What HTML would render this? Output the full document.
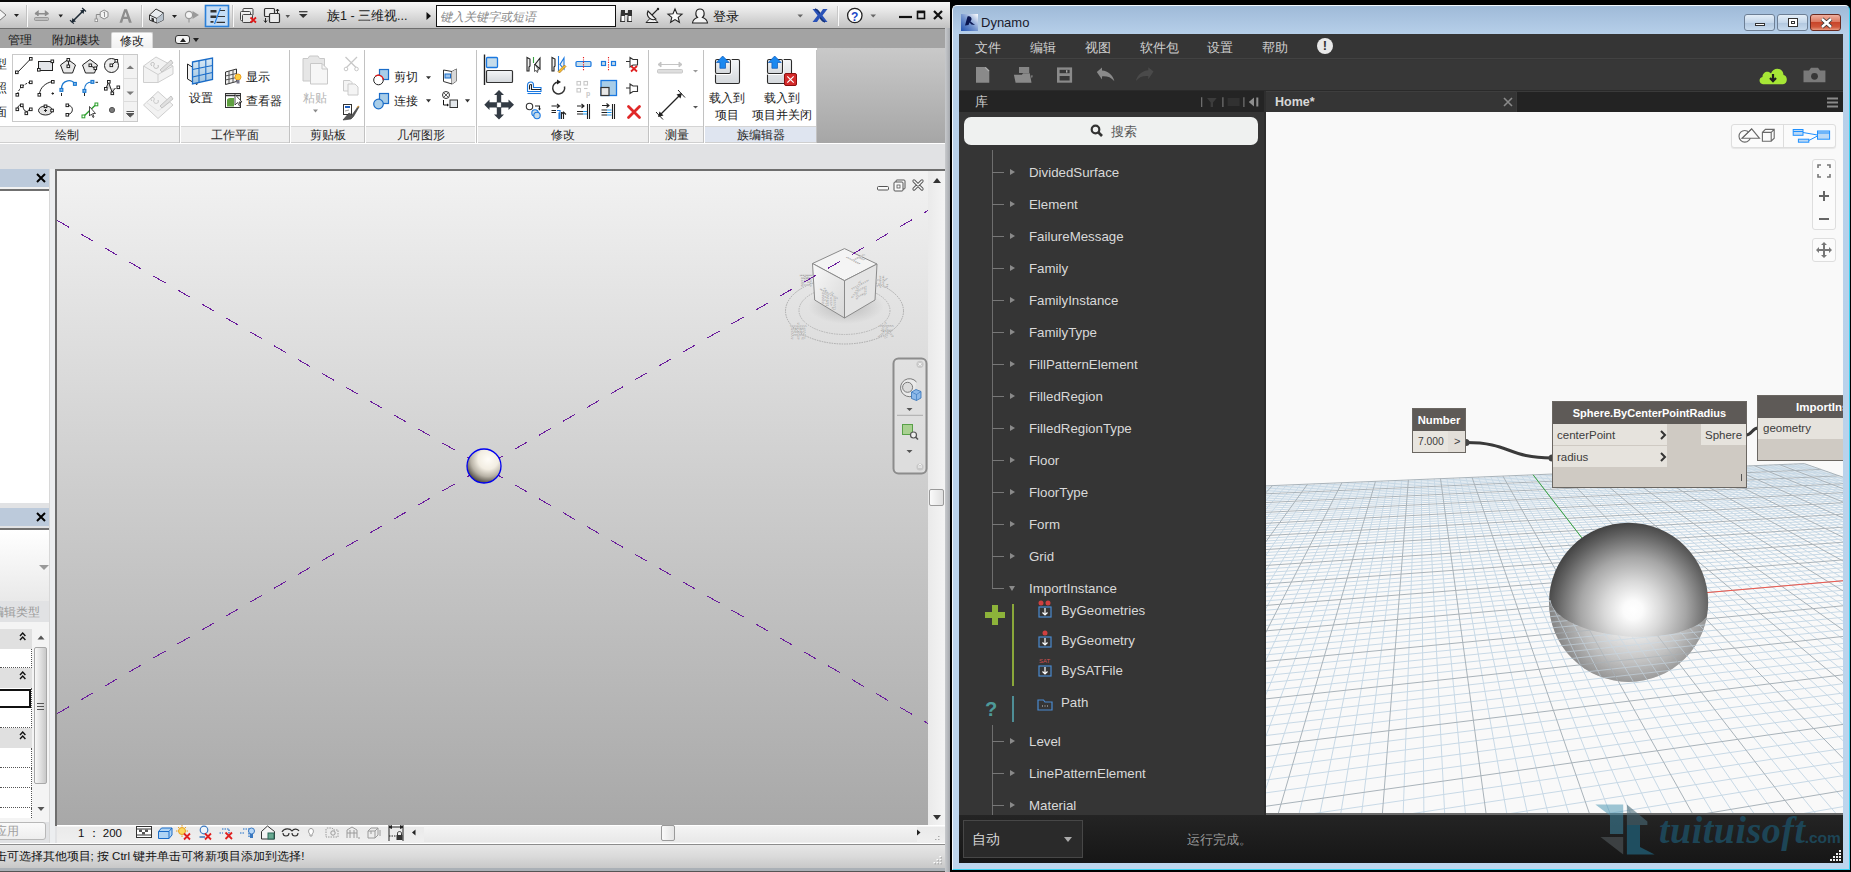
<!DOCTYPE html><html><head><meta charset="utf-8"><style>
*{margin:0;padding:0;box-sizing:border-box}
html,body{width:1851px;height:872px;overflow:hidden;background:#000;font-family:"Liberation Sans",sans-serif}
.a{position:absolute}
.t{position:absolute;white-space:nowrap;line-height:1}
svg{overflow:visible}
/* ---------- dynamo ---------- */
#dy{left:952px;top:5px;width:898px;height:865px;border-radius:5px 5px 0 0;background:linear-gradient(#9fbad8 0,#b6cfe9 28px,#bdd5ed 100%);border:1px solid #f4f8fc;border-right-color:#3ad2f2;border-bottom-color:#3ad2f2}
#dyin{left:6px;top:28px;width:884px;height:829px;background:#353535;overflow:hidden}
.dmenu{position:absolute;top:8px;color:#cfcfcf;font-size:12.5px;line-height:1;white-space:nowrap}
.lib{position:absolute;left:70px;color:#d9d9d9;font-size:13.3px;line-height:1;white-space:nowrap}
.lstub{position:absolute;left:33px;width:12px;height:1px;background:#777}
.larr{position:absolute;left:51px;width:0;height:0;border-left:5px solid #8a8a8a;border-top:3.5px solid transparent;border-bottom:3.5px solid transparent}
.node{position:absolute;background:#cfcac3;border:1px solid #6b6762}
.nhead{position:absolute;left:0;top:0;right:0;background:#5e5a57;color:#fff;font-weight:bold;text-align:center;white-space:nowrap;line-height:1}
.nrow{position:absolute;background:#e6e3dd;color:#3c3c3c;font-size:11.5px;white-space:nowrap;line-height:1}
/* ---------- revit ---------- */
#rv{left:0;top:0;width:950px;height:872px;background:#e1e2e4;overflow:hidden}
.qsep{position:absolute;top:6px;width:1px;height:18px;background:#c4c4c4;border-right:1px solid #fff}
.dd{position:absolute;width:0;height:0;border-top:4px solid #333;border-left:3.5px solid transparent;border-right:3.5px solid transparent}
.pt{position:absolute;top:78px;height:17px;background:#efefef;border-top:1px solid #d4d4d4;border-bottom:1px solid #cfcfcf;color:#262626;font-size:12px;line-height:16px;text-align:center;white-space:nowrap}
.psep{position:absolute;top:2px;width:1px;height:93px;background:#c2c2c2}
.rt{position:absolute;font-size:12px;color:#222;white-space:nowrap;line-height:1}
</style></head><body><div id="rv" class="a">
 <!-- QAT -->
 <div class="a" style="left:0;top:0;width:950px;height:2px;background:#0a0a0a"></div>
 <div class="a" style="left:0;top:2px;width:950px;height:26px;background:linear-gradient(#f8f8f8,#e8e8e8 30%,#d2d2d2 70%,#c2c2c2)"></div>
 <svg class="a" style="left:0;top:0" width="950" height="30">
 <path d="M-1 9L6 15L-1 21" fill="#f4f4f4" stroke="#777" stroke-width="1"/>
 <path d="M14 14H19L16.5 17Z" fill="#222"/>
 <path d="M26.5 5V27" stroke="#c2c2c2"/><path d="M27.5 5V27" stroke="#fafafa"/>
 <path d="M35 13.7H48.5M35 13.7L38 11.5V16M48.5 13.7L45.5 11.5V16" stroke="#8c8c8c" stroke-width="1.4" fill="#8c8c8c"/>
 <rect x="34.5" y="17.5" width="14" height="3" rx="1" fill="#bcbcbc" stroke="#8c8c8c" stroke-width=".8"/>
 <path d="M58.5 14.5H63L60.7 17.5Z" fill="#222"/>
 <path d="M73 21L83 11" stroke="#1e2a36" stroke-width="1.6"/><path d="M71.5 22.5L72.5 18L76 21.5ZM84.5 9.5L80 10.5L83.5 14Z" fill="#1e2a36"/>
 <path d="M70 20.2L73.9 23.6M82.1 8L86 11.5" stroke="#1e2a36" stroke-width="1.2"/>
 <path d="M104.1 10L108 12.2V16.8L104.1 19L100.2 16.8V12.2Z" fill="#f2f2f2" stroke="#8a8a8a"/>
 <path d="M103.5 12.5L104.5 12V17" stroke="#8a8a8a" stroke-width=".9" fill="none"/>
 <path d="M96.3 19V14.5H100" stroke="#8a8a8a" fill="none"/><rect x="95" y="19" width="2.6" height="2.6" fill="#fff" stroke="#8a8a8a" stroke-width=".8"/>
 <path d="M119.5 22.7L124.2 9.3H127L131.8 22.7H129L127.8 19H123.3L122.2 22.7ZM124 16.8H127.1L125.6 12Z" fill="#8c8c8c"/>
 <path d="M141.5 5V27" stroke="#c2c2c2"/><path d="M142.5 5V27" stroke="#fafafa"/>
 <path d="M149.5 15L156 9L163.5 13V20L157 23L149.5 20Z" fill="#e8ecf0" stroke="#333" stroke-width="1"/>
 <path d="M149.5 15L157 18.5L163.5 13M157 18.5V23" stroke="#333" fill="none"/><path d="M157 18.5L163.5 13V20L157 23Z" fill="#b8c2cc"/>
 <path d="M151.5 21V17.5L154 18.5V22" fill="#333"/>
 <path d="M172 15H177L174.5 18Z" fill="#222"/>
 <circle cx="189" cy="15" r="3.6" fill="#f4f4f4" stroke="#9a9a9a" stroke-width="1.2"/><path d="M192.5 11L199 15L192.5 19Z" fill="#9a9a9a"/><path d="M189 18.6V22.5" stroke="#9a9a9a" stroke-width="1.2"/>
 <rect x="205.5" y="5.5" width="23" height="21" fill="#c6ddf5" stroke="#2a7fd8" stroke-width="1.6"/>
 <path d="M210.5 10H216.5V12.5H210.5ZM210.5 15.5H216.5V18H210.5ZM210.5 21H213.5V22.8H210.5Z" fill="#333"/>
 <path d="M219 10.5H225M217.5 16.5H225M216.5 22.3H225" stroke="#333" stroke-width="1.2"/>
 <path d="M220.5 8L214.5 24" stroke="#2080e8" stroke-width="1.2"/>
 <path d="M232.5 5V27" stroke="#c2c2c2"/><path d="M233.5 5V27" stroke="#fafafa"/>
 <rect x="243" y="8.5" width="10" height="7" rx="1" fill="#f0f0f0" stroke="#444"/><rect x="240.5" y="11.5" width="10" height="9" rx="1" fill="#f0f0f0" stroke="#444"/><rect x="242.5" y="14.5" width="10" height="8" rx="1" fill="#e8e8e8" stroke="#444"/>
 <path d="M250.5 17.5L256 22.5M256 17.5L250.5 22.5" stroke="#e01818" stroke-width="1.8"/>
 <rect x="264.5" y="8.5" width="10" height="8" rx="1" fill="#eee" stroke="#333" stroke-width="1.2"/><rect x="269.5" y="13.5" width="10" height="9" rx="1" fill="#ececec" stroke="#333" stroke-width="1.2"/>
 <path d="M277.5 13V9.5M276 11L277.5 9L279 11M265.5 18V22M264 20.5L265.5 22.5L267 20.5" stroke="#111" stroke-width=".9" fill="none"/>
 <path d="M285.5 15H290L287.7 18Z" fill="#555"/>
 <path d="M299 11.7H307.5" stroke="#333" stroke-width="1.2"/><path d="M299 14H307.5L303.2 18Z" fill="#333"/>
 <text x="327" y="20" font-family="Liberation Sans" font-size="12.5" fill="#1a1a1a">族1 - 三维视...</text>
 <path d="M426.5 12V20L431 16Z" fill="#111"/>
 <rect x="436.5" y="5.5" width="179" height="21" fill="#fff" stroke="#111" stroke-width="1"/>
 <text x="440" y="20.5" font-family="Liberation Sans" font-size="12" font-style="italic" fill="#8a8a8a">键入关键字或短语</text>
 <path d="M621 10H625V22H620ZM628 10H632V22H627Z" fill="#333"/><rect x="621.5" y="16" width="3" height="5" fill="#fff"/><rect x="628.5" y="16" width="3" height="5" fill="#fff"/><path d="M625 14H628" stroke="#333" stroke-width="2"/>
 <path d="M646 22.5H658L654 18.5H650Z" fill="#f2f2f2" stroke="#222" stroke-width="1"/><path d="M648 11A6 6 0 0 0 656 19Z" fill="#f0f0f0" stroke="#222" stroke-width="1.1"/><path d="M652 15L657.5 9.5" stroke="#222" stroke-width="1.1"/><circle cx="658" cy="9" r="1.2" fill="#222"/>
 <path d="M675 9L677 13.8L682 14.2L678.2 17.4L679.4 22.3L675 19.6L670.6 22.3L671.8 17.4L668 14.2L673 13.8Z" fill="#fafafa" stroke="#222" stroke-width="1.1"/>
 <path d="M692.5 23C693 19 696 18 697.5 17.5C695 15.5 695 9 700 9C705 9 705 15.5 702.5 17.5C704 18 707 19 707.5 23Z" fill="#f4f4f4" stroke="#222" stroke-width="1.1"/>
 <text x="713" y="20.5" font-family="Liberation Sans" font-size="12.5" fill="#111">登录</text>
 <path d="M797.5 14.5H803L800.2 17.5Z" fill="#666"/>
 <path d="M812.5 9H817L820 13.5L823 9H827.5L822.5 15.5L827.5 22H823L820 17.5L817 22H812.5L817.5 15.5Z" fill="#2a52b8"/><path d="M815 9C818 10 819 12 820 13.5M825 22C822 21 821 19 820 17.5" stroke="#16347a" stroke-width="1.5" fill="none"/>
 <path d="M837.5 6V26" stroke="#c8c8c8"/><path d="M838.5 6V26" stroke="#fafafa"/>
 <circle cx="854.8" cy="15.5" r="7.2" fill="#fff" stroke="#222" stroke-width="1.3"/><text x="851" y="20.5" font-family="Liberation Sans" font-weight="bold" font-size="12" fill="#1c48c8">?</text>
 <path d="M870.5 14.5H876L873.2 17.5Z" fill="#666"/>
 <path d="M899 17H912" stroke="#111" stroke-width="2.2"/>
 <rect x="917.5" y="11.5" width="7" height="7" fill="none" stroke="#111" stroke-width="1.6"/><path d="M917.5 12H924.5" stroke="#111" stroke-width="2.5"/>
 <path d="M934 11L942 19M942 11L934 19" stroke="#111" stroke-width="2.2"/>
</svg>

 <!-- tabs -->
 <div class="a" style="left:0;top:28px;width:946px;height:20px;background:#a3a3a3;border-top:1px solid #6e6e6e"></div>
 <div class="rt" style="left:8px;top:34px;color:#1a1a1a">管理</div>
 <div class="rt" style="left:52px;top:34px;color:#1a1a1a">附加模块</div>
 <div class="a" style="left:111px;top:32px;width:42px;height:17px;background:linear-gradient(#fdfdfd,#f0f0f0);border:1px solid #d6d6d6;border-bottom:0;border-radius:2px 2px 0 0"></div>
 <div class="rt" style="left:120px;top:35px;color:#1a1a1a">修改</div>
 <div class="a" style="left:175px;top:35px;width:15px;height:9px;border:1px solid #333;border-radius:3px;background:#f4f4f4"><div class="a" style="left:3.5px;top:1.5px;width:0;height:0;border-bottom:4px solid #222;border-left:3.5px solid transparent;border-right:3.5px solid transparent"></div></div>
 <div class="dd" style="left:193px;top:38px;border-top-color:#222"></div>
 <!-- ribbon -->
 <div class="a" style="left:0;top:48px;width:946px;height:96px;background:#fff"></div>
 <div class="a" style="left:817px;top:48px;width:129px;height:95px;background:linear-gradient(#c9c9c9,#b4b4b4 60%,#a6a6a6)"></div>
 <div class="pt" style="left:0;top:126px;width:179px;padding-left:0"><span class="a" style="left:55px;top:0">绘制</span></div>
 <div class="pt" style="left:181px;top:126px;width:108px">工作平面</div>
 <div class="pt" style="left:291px;top:126px;width:73px">剪贴板</div>
 <div class="pt" style="left:366px;top:126px;width:109px">几何图形</div>
 <div class="pt" style="left:478px;top:126px;width:170px">修改</div>
 <div class="pt" style="left:650px;top:126px;width:53px">测量</div>
 <div class="pt" style="left:705px;top:126px;width:111px;background:#dfe5f0">族编辑器</div>
 <div class="psep" style="left:179px;top:50px"></div>
 <div class="psep" style="left:289px;top:50px"></div>
 <div class="psep" style="left:364px;top:50px"></div>
 <div class="psep" style="left:476px;top:50px"></div>
 <div class="psep" style="left:648px;top:50px"></div>
 <div class="psep" style="left:703px;top:50px"></div>
 <div class="psep" style="left:816px;top:50px"></div>
 <div class="rt" style="left:-5px;top:58px;color:#1a1a1a">型</div>
<div class="rt" style="left:-5px;top:82px;color:#1a1a1a">照</div>
<div class="rt" style="left:-5px;top:106px;color:#1a1a1a">面</div>
<div class="rt" style="left:189px;top:92px;color:#1a1a1a">设置</div>
<div class="rt" style="left:246px;top:71px;color:#1a1a1a">显示</div>
<div class="rt" style="left:246px;top:95px;color:#1a1a1a">查看器</div>
<div class="rt" style="left:303px;top:92px;color:#b4b4b4">粘贴</div>
<div class="rt" style="left:394px;top:71px;color:#1a1a1a">剪切</div>
<div class="rt" style="left:394px;top:95px;color:#1a1a1a">连接</div>
<div class="rt" style="left:709px;top:92px;color:#1a1a1a">载入到</div>
<div class="rt" style="left:715px;top:109px;color:#1a1a1a">项目</div>
<div class="rt" style="left:764px;top:92px;color:#1a1a1a">载入到</div>
<div class="rt" style="left:752px;top:109px;color:#1a1a1a">项目并关闭</div>
<svg class="a" style="left:0;top:0" width="950" height="144">
 <defs>
  <linearGradient id="gg" x1="0" y1="0" x2="0" y2="1"><stop offset="0" stop-color="#f4f6f8"/><stop offset="1" stop-color="#d4d8dc"/></linearGradient>
  <linearGradient id="gb" x1="0" y1="0" x2="0" y2="1"><stop offset="0" stop-color="#dcebf6"/><stop offset="1" stop-color="#9cc2e0"/></linearGradient>
 </defs>
 <!-- gallery -->
 <rect x="12.5" y="54.5" width="125" height="67" fill="#fff" stroke="#c9c9c9"/>
 <rect x="123.5" y="55" width="13.5" height="66" fill="#f2f2f2"/><path d="M123.5 55V121" stroke="#dedede"/>
 <path d="M124 78.5H137M124 101.5H137" stroke="#dcdcdc"/>
 <path d="M126.5 69H134L130.2 65.5Z" fill="#7a7a7a"/><path d="M126.5 91.5H134L130.2 95Z" fill="#7a7a7a"/>
 <path d="M126.5 111.5H134M126.5 113.5L134 113.5L130.2 117Z" stroke="#555" fill="#555"/>
 <g fill="#fff" stroke="#222" stroke-width="1">
  <!-- row1 -->
  <path d="M17.5 72.5L30.5 59" fill="none"/><rect x="15.5" y="71" width="2.6" height="2.6"/><rect x="29.5" y="57.5" width="2.6" height="2.6"/>
  <rect x="38.5" y="61.5" width="14" height="9" fill="#e4e6ea"/><rect x="37.5" y="68.5" width="2.6" height="2.6"/><rect x="51" y="60" width="2.6" height="2.6"/>
  <path d="M68 59.5L75.5 65L72.5 73H63.5L60.5 65Z" fill="#e8e8e8"/><path d="M68.5 60.5V66" fill="none"/><rect x="67" y="58.5" width="2.6" height="2.6"/><rect x="67" y="65" width="2.6" height="2.6"/>
  <path d="M90 59.5L97.5 65L94.5 73H85.5L82.5 65Z" fill="#e8e8e8"/><path d="M90.5 65.5L95 68.5" fill="none"/><rect x="89" y="64" width="2.6" height="2.6"/><rect x="94" y="67" width="2.6" height="2.6"/>
  <circle cx="111.5" cy="65.5" r="7" fill="#eee"/><path d="M111.5 65.5L116 61" fill="none"/><rect x="110" y="64" width="2.6" height="2.6"/><rect x="115" y="59.5" width="2.6" height="2.6"/>
  <!-- row2 -->
  <path d="M17.5 94C19 88 24 84 30.5 82" fill="none" stroke-dasharray="2 1.2"/><rect x="16" y="93.5" width="2.6" height="2.6"/><rect x="20.5" y="85" width="2.6" height="2.6"/><rect x="29.5" y="81" width="2.6" height="2.6"/>
  <path d="M39.5 94C40 88 45 83 52.5 81.5" fill="none"/><rect x="38" y="93.5" width="2.6" height="2.6"/><rect x="51.5" y="80.5" width="2.6" height="2.6"/><path d="M51.5 93.5H54M52.7 92.3V94.7" fill="none"/>
 </g>
 <g fill="#fff" stroke="#1a78d0" stroke-width="1.2">
  <path d="M61.5 89C61.5 79 73.5 79 74.5 84" fill="none"/><rect x="60" y="88.5" width="2.8" height="2.8" fill="#9cc8f0"/><rect x="73.5" y="82.5" width="2.8" height="2.8" fill="#9cc8f0"/>
  <path d="M84.5 90C84.5 85 87 82 92 82" fill="none"/><rect x="83" y="89.5" width="2.8" height="2.8" fill="#9cc8f0"/><rect x="91" y="80.5" width="2.8" height="2.8" fill="#9cc8f0"/>
 </g>
 <path d="M61.5 93V96M84.5 93V96" stroke="#222"/><path d="M95.5 82.3H98" stroke="#222"/>
 <g fill="#fff" stroke="#222" stroke-width="1">
  <path d="M106 88.5L108.5 82L112 92L115.5 88" fill="#d8d8d8"/><rect x="104.5" y="87.5" width="2.6" height="2.6"/><rect x="107.5" y="80.5" width="2.6" height="2.6"/><rect x="111" y="92" width="2.6" height="2.6"/><rect x="117" y="86" width="2.6" height="2.6"/>
  <!-- row3 -->
  <path d="M17.5 109C18 104 22 104 23 107C24 112 28 113 29.5 109" fill="none"/><rect x="16" y="108" width="2.6" height="2.6"/><rect x="20.5" y="104" width="2.6" height="2.6"/><rect x="25" y="112" width="2.6" height="2.6"/><rect x="29.5" y="108" width="2.6" height="2.6"/>
  <ellipse cx="45.5" cy="110.5" rx="7" ry="4.5" fill="#e4e4e4"/><path d="M44 110.5H47M45.5 109V112" fill="none"/><rect x="44.2" y="105" width="2.6" height="2.6"/><rect x="50.8" y="109.2" width="2.6" height="2.6"/>
  <path d="M67.5 105.5C74 105 74 114 67.5 114.5" fill="none"/><rect x="66" y="104" width="2.6" height="2.6"/><rect x="66" y="113.5" width="2.6" height="2.6"/>
 </g>
 <path d="M83.5 116.5L96 104.5" stroke="#2ca02c" stroke-width="1.4"/><rect x="82" y="115" width="2.8" height="2.8" fill="#fff" stroke="#2ca02c"/><rect x="95" y="103" width="2.8" height="2.8" fill="#fff" stroke="#2ca02c"/>
 <path d="M89.5 106.5V116L91.5 114L93 117.5L94 117L92.7 113.5H95.5Z" fill="#fff" stroke="#222" stroke-width=".8"/>
 <circle cx="112" cy="110" r="2.6" fill="#7a7a7a" stroke="#555"/>
 <!-- big gray icons -->
 <g fill="#f2f2f2" stroke="#cfcfcf" stroke-width="1">
  <path d="M143.5 66L156 57L173 66V74L158 82.5H143.5Z"/><path d="M143.5 66L158 74.5L173 66M158 74.5V82.5" fill="none"/>
  <path d="M152 66C148 62 156 61 154 65C152 69 160 70 158 65" fill="none" stroke="#bbb"/>
  <path d="M160 70L171 60L173 63L162 72Z" fill="#e0e0e0" stroke="#c4c4c4"/>
  <path d="M143.5 105L158 91.5L173 105L158 118.5Z"/><path d="M146 102L158 111L170 102" fill="none" stroke="#e2e2e2"/>
  <path d="M152 101C148 97 156 96 154 100C152 104 160 105 158 100" fill="none" stroke="#c4c4c4"/>
  <path d="M160 106L171 96L173 99L162 108Z" fill="#e0e0e0" stroke="#c4c4c4"/>
 </g>
 <!-- work plane set -->
 <path d="M187.5 64V79L197 84.5V70Z" fill="#f4f4f4" stroke="#222"/>
 <path d="M192.5 62L212.5 58V79.5L192.5 84Z" fill="url(#gb)" stroke="#1a6cc8" stroke-width="1.3"/>
 <path d="M199 60.6V82.5M205.8 59.3V81M192.5 69.5L212.5 65.5M192.5 77L212.5 72.5" stroke="#1a6cc8" stroke-width="1.1"/>
 <!-- show -->
 <path d="M225.5 72L236.5 69V81.5L225.5 84.5Z" fill="#f0f0f0" stroke="#333"/><path d="M229 71V84M233 70V83M225.5 76L236.5 73.5M225.5 80L236.5 77.5" stroke="#555"/>
 <circle cx="238" cy="77" r="3" fill="#fcd040" stroke="#f0a020"/><rect x="236.5" y="80" width="3" height="3.5" fill="#778"/>
 <!-- viewer -->
 <rect x="225.5" y="93.5" width="15" height="14" fill="#fff" stroke="#333"/><path d="M225.5 95.5H240.5" stroke="#333" stroke-width="1.5"/>
 <path d="M227 106.5V100C227 99 228 98 230 98H234V106.5Z" fill="#5fa040"/><path d="M235 94.5V105L237.5 102.5L239.5 106L240.5 105.5L239 102H242Z" fill="#fff" stroke="#222" stroke-width=".8"/>
 <!-- paste -->
 <path d="M303 58.5H308L309.5 56H318L319.5 58.5H324.5V81H303Z" fill="#e6e6e6" stroke="#c8c8c8"/>
 <path d="M310.5 63.5H322L327.5 69V84H310.5Z" fill="#f6f6f6" stroke="#c8c8c8"/><path d="M322 63.5V69H327.5" fill="none" stroke="#c8c8c8"/>
 <path d="M313 109.5H318L315.5 112.5Z" fill="#8a8a8a"/>
 <!-- scissors, copy, match -->
 <path d="M345.5 57L357 68.5M357 57L345.5 68.5" stroke="#c8c8c8" stroke-width="1.3"/><circle cx="346" cy="69" r="1.8" fill="#fff" stroke="#c8c8c8"/><circle cx="356.5" cy="69" r="1.8" fill="#fff" stroke="#c8c8c8"/>
 <path d="M343.5 80.5H350L352 82.5V91H343.5Z" fill="#f4f4f4" stroke="#cacaca"/><path d="M348 84H355L358 87V95H348Z" fill="#f4f4f4" stroke="#cacaca"/>
 <rect x="343.5" y="104.5" width="8" height="10" fill="#fff" stroke="#333"/><rect x="345" y="106" width="5" height="2" fill="#2060c0"/><path d="M345 111L349 110" stroke="#999"/>
 <path d="M343 120L349 113L352 115L358.5 106L359 107L353.5 116.5L351 119Z" fill="#555" stroke="#333" stroke-width=".6"/><path d="M356 108L358.5 105.5L359 107Z" fill="#e0a040"/>
 <!-- cut/join -->
 <rect x="379.5" y="69.5" width="9" height="10" fill="#a8cde8" stroke="#1a6cc8" stroke-width="1.2"/>
 <circle cx="378.5" cy="80" r="4.8" fill="#fff" stroke="#222" stroke-width="1"/><path d="M375.5 76.3A4.8 4.8 0 0 1 383.3 80" stroke="#e81818" stroke-width="1.2" fill="none"/>
 <path d="M426 76.2H431L428.5 79.3Z" fill="#333"/><path d="M426 99.3H431L428.5 102.4Z" fill="#333"/><path d="M465 99.3H470L467.5 102.4Z" fill="#333"/>
 <rect x="379.5" y="93.5" width="9" height="10" fill="#a8cde8" stroke="#1a6cc8" stroke-width="1.2"/>
 <circle cx="378.5" cy="104" r="4.8" fill="#a8cde8" stroke="#1a6cc8" stroke-width="1.2"/>
 <path d="M443.5 70L452 71.5L456.5 69V81L452 84L443.5 81.5Z" fill="#fff" stroke="#333"/><path d="M452 71.5V84" stroke="#333"/><path d="M452 71.5L456.5 69V81L452 84Z" fill="#d8d8d8"/>
 <rect x="445" y="74" width="5.5" height="4" fill="#9cc4ec" stroke="#1a6cc8"/>
 <circle cx="446" cy="95" r="3.5" fill="#fff" stroke="#333"/><path d="M443.6 92.6L448.4 97.4M448.4 92.6L443.6 97.4" stroke="#333" stroke-width=".8"/>
 <rect x="450" y="100" width="7.5" height="7.5" fill="#e4e8ec" stroke="#333"/><path d="M443.5 100V105H448" fill="none" stroke="#111"/><path d="M447 103.5L449 105L447 106.5Z" fill="#111"/>
 <!-- modify: align, move -->
 <path d="M484.5 54.5V85" stroke="#222" stroke-width="1.4"/>
 <rect x="486.5" y="57.5" width="11" height="10" rx="1" fill="#c6dcea" stroke="#1a78e0" stroke-width="1.3"/>
 <rect x="486.5" y="70.5" width="26" height="12" rx="1" fill="url(#gg)" stroke="#333" stroke-width="1.2"/>
 <path d="M499 90L504 95H501.2V102.2H508.5V99.5L514 104.8L508.5 110V107.4H501.2V114.6H504L499 119.6L494 114.6H496.8V107.4H489.5V110L484.3 104.8L489.5 99.5V102.2H496.8V95H494Z" fill="#333b44"/>
 <rect x="496.8" y="102.2" width="4.4" height="5.2" fill="#fff" stroke="#333b44" stroke-width=".6"/>
 <!-- modify small icons -->
 <g stroke-width="1.1">
  <path d="M527 57.5L530 59V66L529 67V71H527Z" fill="#f0f0f0" stroke="#222"/><path d="M533.5 57V63" stroke="#38a040"/><path d="M540 58V69L535 64.5Z" fill="#f0f0f0" stroke="#222"/>
  <path d="M534.5 64V71.5L536 70.3L537.2 72.5L538 72L537 70H539Z" fill="#fff" stroke="#222" stroke-width=".7"/>
  <path d="M552 57.5L555 59V66L554 67V71H552Z" fill="#f0f0f0" stroke="#222"/><path d="M558.5 56V71" stroke="#1a78e0"/><path d="M564 58V69L560 64.5Z" fill="#f0f0f0" stroke="#1a78e0"/>
  <path d="M558 71.5L564.5 65L566 66.5L559.5 73Z" fill="#f8c030" stroke="#a06010" stroke-width=".6"/>
  <rect x="576" y="61.5" width="15" height="5" rx="1" fill="#c8dcea" stroke="#1a78e0" stroke-width="1.2"/><path d="M583.5 57V71" stroke="#e82020" stroke-dasharray="1.2 1.2"/>
  <rect x="601.5" y="61.5" width="4" height="4" fill="#c8dcea" stroke="#1a78e0" stroke-width="1.2"/><rect x="611.5" y="61.5" width="4" height="4" fill="#c8dcea" stroke="#1a78e0" stroke-width="1.2"/><path d="M608.5 57V71" stroke="#e82020" stroke-dasharray="1.2 1.2"/>
  <path d="M626 61.5H630M630 57.5L633 59.5H637.5V65H633L630 67Z" fill="#fff" stroke="#333"/><path d="M631 66L637 71.5M637 66L631 71.5" stroke="#e02020" stroke-width="1.8"/>
  <path d="M527.5 90V85.5C527.5 83 529.5 82 531 82C532.5 82 533.5 83.5 533.5 85V87.5H541V91.5H527.5Z" fill="none" stroke="#1a78e0"/><path d="M529.5 89.5V86C529.5 85 530 84.5 531 84.5C532 84.5 531.5 85 531.5 86V89.5H541" fill="none" stroke="#222"/><path d="M527.5 93.5H541" stroke="#1a78e0"/>
  <path d="M564.5 86.5A6 6 0 1 1 558 82" fill="none" stroke="#333" stroke-width="1.5"/><path d="M557 79.5L561 82L557 84.5Z" fill="#222"/>
  <g fill="#fff" stroke="#c8c8c8"><rect x="577" y="81.5" width="3.5" height="3.5"/><rect x="584" y="81.5" width="3.5" height="3.5"/><rect x="577" y="88.5" width="3.5" height="3.5"/><path d="M584 88.5H587.5"/></g><text x="586" y="96" font-size="7" font-weight="bold" fill="#c8c8c8" font-family="Liberation Sans">p</text>
  <rect x="601" y="80.5" width="15.5" height="15" fill="#a8cde8" stroke="#1a78e0" stroke-width="1.3"/><rect x="601" y="87.5" width="8" height="8" fill="#e8e8e8" stroke="#333" stroke-width="1.2"/>
  <path d="M626 88H630M630 84L633 86H637.5V91.5H633L630 93.5Z" fill="#fff" stroke="#333"/>
  <circle cx="529.5" cy="106.5" r="3.2" fill="#fff" stroke="#333"/><circle cx="535" cy="113" r="3.2" fill="#c6dcea" stroke="#1a78e0"/><circle cx="537" cy="115.5" r="3.2" fill="#c6dcea" stroke="#1a78e0"/><path d="M535 106H539.5V109" fill="none" stroke="#222"/><path d="M538 108.5H541L539.5 110.5Z" fill="#222"/>
  <path d="M551.5 106H559M557 104L559.5 106L557 108M551.5 110.5H556M551.5 112.5H556" stroke="#222" fill="none"/><path d="M557 110.5H560V119M559 112.5V119" stroke="#1a78e0" fill="none"/><path d="M561.5 119V112M563.5 119V113M561 114.5L563.5 112L566 114.5" stroke="#222" fill="none"/>
  <path d="M577 106H583.5M581.5 104L584 106L581.5 108M577 111.5H583M577 114H583" stroke="#222" fill="none"/><path d="M583 111.5H587M583 114H587" stroke="#1a98f0"/><path d="M587.5 104V119M589.5 104V119" stroke="#222"/>
  <path d="M602 105.5H608.5M606.5 103.5L609 105.5L606.5 107.5M601.5 110H607M601.5 112.5H607M601.5 115H607" stroke="#222" fill="none"/><path d="M607 110H611.5M607 112.5H611.5M607 115H611.5" stroke="#1a98f0"/><path d="M612.5 104V119M614.5 104V119" stroke="#222"/>
  <path d="M628.5 106.5L639.5 117.5M639.5 106.5L628.5 117.5" stroke="#e02828" stroke-width="2.8" stroke-linecap="round"/>
 </g>
 <!-- measure -->
 <path d="M658 64.5H682M658 64.5L661 62V67ZM682 64.5L679 62V67Z" stroke="#c4c4c4" fill="#c4c4c4"/>
 <rect x="657.5" y="69.5" width="25" height="3.5" rx="1" fill="#dedede" stroke="#c8c8c8"/>
 <path d="M693 70H698L695.5 72.5Z" fill="#9a9a9a"/>
 <path d="M659 116L681 94" stroke="#222" stroke-width="1.2"/><path d="M658 117L659.5 111.5L663.5 115.5ZM682 93L676.5 94.5L680.5 98.5Z" fill="#222"/><path d="M656 112L663 119.5M678 90L685 97.5" stroke="#222"/>
 <path d="M693 106H698L695.5 108.5Z" fill="#555"/>
 <!-- family editor -->
 <g stroke="#2a2a2a" stroke-width="1.1">
  <rect x="715.5" y="59.5" width="24" height="24" rx="1.5" fill="url(#gg)"/>
  <rect x="715.5" y="59.5" width="15" height="14" rx="1.5" fill="#e8eaee" stroke="#fff" stroke-width="3"/>
  <rect x="715.5" y="59.5" width="15" height="14" rx="1.5" fill="url(#gg)"/>
  <rect x="767.5" y="59.5" width="24" height="24" rx="1.5" fill="url(#gg)"/>
  <rect x="767.5" y="59.5" width="15" height="14" rx="1.5" fill="#e8eaee" stroke="#fff" stroke-width="3"/>
  <rect x="767.5" y="59.5" width="15" height="14" rx="1.5" fill="url(#gg)"/>
 </g>
 <path d="M722.7 56L729.2 62.5H725.5V68.3H719.9V62.5H716.3Z" fill="#1a88f0" stroke="#0a58b8" stroke-width=".7"/>
 <path d="M774.7 56L781.2 62.5H777.5V68.3H771.9V62.5H768.3Z" fill="#1a88f0" stroke="#0a58b8" stroke-width=".7"/>
 <rect x="784.5" y="73.5" width="12" height="12" rx="1.5" fill="#d42a2a" stroke="#8a1010"/><path d="M787.3 76.3L793.7 82.7M793.7 76.3L787.3 82.7" stroke="#fff" stroke-width="1.2"/>
</svg>

 <div class="a" style="left:0;top:143px;width:946px;height:1px;background:#fff"></div>
 <!-- left panels -->
 <div class="a" style="left:0;top:169px;width:51px;height:18px;background:#bccadb"></div>
 <svg class="a" style="left:36px;top:173px" width="10" height="10"><path d="M1 1L9 9M9 1L1 9" stroke="#000" stroke-width="2"/></svg>
 <div class="a" style="left:0;top:187px;width:50px;height:2px;background:#f2f2f2"></div>
 <div class="a" style="left:0;top:189px;width:50px;height:2px;background:#707070"></div>
 <div class="a" style="left:0;top:191px;width:49px;height:312px;background:#fff"></div>
 <div class="a" style="left:0;top:508px;width:51px;height:18px;background:#bccadb"></div>
 <svg class="a" style="left:36px;top:512px" width="10" height="10"><path d="M1 1L9 9M9 1L1 9" stroke="#000" stroke-width="2"/></svg>
 <div class="a" style="left:0;top:528px;width:50px;height:2px;background:#707070"></div>
 <div class="a" style="left:0;top:530px;width:49px;height:71px;background:linear-gradient(#fff,#e9e9e9)"></div>
 <div class="a" style="left:39px;top:565px;width:0;height:0;border-top:5px solid #999;border-left:5px solid transparent;border-right:5px solid transparent"></div>
 <div class="rt" style="left:-8px;top:606px;color:#9a9a9a">编辑类型</div>
 <div class="a" style="left:0;top:622px;width:50px;height:200px;background:#f4f4f4"></div>
<div class="a" style="left:0;top:629px;width:32px;height:20px;background:#e0e0e0"></div>
<div class="a" style="left:0;top:649px;width:32px;height:19px;background:#fff;border-right:1px dotted #555;border-bottom:1px dotted #555"></div>
<div class="a" style="left:0;top:668px;width:32px;height:20px;background:#e0e0e0"></div>
<div class="a" style="left:0;top:688px;width:32px;height:40px;background:#fff;border-right:1px dotted #555;border-bottom:1px dotted #555"></div>
<div class="a" style="left:-2px;top:689px;width:33px;height:19px;background:#fff;border:2px solid #111"></div>
<div class="a" style="left:0;top:728px;width:32px;height:20px;background:#e0e0e0"></div>
<div class="a" style="left:0;top:748px;width:32px;height:20px;background:#fff;border-right:1px dotted #555;border-bottom:1px dotted #555"></div>
<div class="a" style="left:0;top:768px;width:32px;height:20px;background:#fff;border-right:1px dotted #555;border-bottom:1px dotted #555"></div>
<div class="a" style="left:0;top:788px;width:32px;height:20px;background:#fff;border-right:1px dotted #555;border-bottom:1px dotted #555"></div>
<div class="a" style="left:0;top:808px;width:32px;height:10px;background:#fff;border-right:1px dotted #555"></div>
<svg class="a" style="left:0;top:620px" width="50" height="200">
 <path d="M20 16L22.7 13L25.4 16M20 20L22.7 17L25.4 20M20 55L22.7 52L25.4 55M20 59L22.7 56L25.4 59M20 115L22.7 112L25.4 115M20 119L22.7 116L25.4 119" stroke="#111" stroke-width="1.4" fill="none"/>
 <path d="M37.5 19.5H44.5L41 15.5Z" fill="#555"/>
 <path d="M37.5 187H44.5L41 191Z" fill="#555"/>
</svg>
<div class="a" style="left:34px;top:647px;width:13px;height:137px;border:1px solid #a8a8a8;border-radius:2px;background:linear-gradient(90deg,#f8f8f8,#dcdcdc 60%,#c8c8c8)"></div>
<svg class="a" style="left:36px;top:702px" width="9" height="9"><path d="M1 1.5H8M1 4.5H8M1 7.5H8" stroke="#555" stroke-width="1.2"/></svg>
<div class="a" style="left:-6px;top:822px;width:52px;height:18px;border:1px solid #b8b8b8;border-radius:3px;background:linear-gradient(#fafafa,#eeeeee)"></div>
<div class="rt" style="left:-5px;top:825px;color:#a0a0a0">应用</div>
<div class="a" style="left:49px;top:169px;width:1px;height:676px;background:#d8d8d8"></div>
<div class="a" style="left:50px;top:169px;width:5px;height:676px;background:#eceef0"></div>

 <!-- viewport -->
 <div class="a" style="left:55px;top:169px;width:891px;height:657px;background:#6e6e6e"></div>
 <div class="a" style="left:57px;top:171px;width:871px;height:654px;background:linear-gradient(#f2f2f2 0,#d0d0d0 45%,#a8a8a8 100%)"></div>
 <svg class="a" style="left:57px;top:171px" width="871" height="654" viewBox="57 171 871 654">
 <defs>
  <clipPath id="vpc"><rect x="57" y="171" width="871" height="654"/></clipPath>
  <radialGradient id="rsph" cx="0.62" cy="0.3" r="0.85"><stop offset="0" stop-color="#fffdf8"/><stop offset=".35" stop-color="#f2ede2"/><stop offset=".6" stop-color="#b8b2a6"/><stop offset=".85" stop-color="#4a463e"/><stop offset="1" stop-color="#222"/></radialGradient>
  <radialGradient id="vcsh" cx=".5" cy=".5" r=".5"><stop offset="0" stop-color="#000" stop-opacity=".18"/><stop offset="1" stop-color="#000" stop-opacity="0"/></radialGradient>
  <linearGradient id="vcl" x1="0" y1="0" x2="1" y2="1"><stop offset="0" stop-color="#f8f8f8"/><stop offset="1" stop-color="#d8d8d8"/></linearGradient>
 </defs>
 <g clip-path="url(#vpc)">
  <!-- viewcube -->
  <ellipse cx="844.5" cy="311" rx="59" ry="33" fill="none" stroke="#a8a8a8" stroke-width="1" stroke-dasharray="1.5 1"/>
  <ellipse cx="844.5" cy="310.5" rx="45.5" ry="24" fill="none" stroke="#b4b4b4" stroke-width="1" stroke-dasharray="1.5 1"/>
  <ellipse cx="846" cy="306" rx="38" ry="18" fill="url(#vcsh)"/>
  <path d="M812.5 263.5L844.5 248.6L877 264L844.5 280.7Z" fill="#f4f4f4" stroke="#8a8a8a"/>
  <path d="M812.5 263.5L844.5 280.7V318L814.7 300Z" fill="url(#vcl)" stroke="#8a8a8a"/>
  <path d="M844.5 280.7L877 264L875 300L844.5 318Z" fill="#e4e4e4" stroke="#8a8a8a"/>
  <g font-family="Liberation Sans" fill="#e6e6e6" stroke="#9c9c9c" stroke-width=".55" stroke-dasharray="1 .8">
   <text x="0" y="0" font-size="18" transform="matrix(1,0.5375,0,1,820,300)">前</text>
   <text x="0" y="0" font-size="18" transform="matrix(1,-0.514,0,1,851,300)">右</text>
   <text x="0" y="0" font-size="13" transform="matrix(1,0.53,-1,0.53,847,257)">上</text>
   <text x="800" y="285" font-size="13">西</text>
   <text x="876" y="286" font-size="12">北</text>
   <text x="790" y="337" font-size="17">南</text>
   <text x="878" y="336" font-size="16">东</text>
  </g>
  <path d="M57 220.3L928 723.5M57 713.7L928 210.5" stroke="#6a1c9c" stroke-width="1" stroke-dasharray="13.8 14.02" shape-rendering="crispEdges"/>
  <!-- sphere -->
  <circle cx="484" cy="466" r="17" fill="url(#rsph)" stroke="#0000f0" stroke-width="1.3"/>
  <!-- window ctrls -->
  <rect x="877.5" y="186.5" width="11" height="3.5" rx="1" fill="#fafafa" stroke="#555" stroke-width="1"/>
  <rect x="896" y="180" width="9" height="9" rx="1" fill="#fafafa" stroke="#555"/><rect x="894" y="182" width="9" height="9" rx="1" fill="#fafafa" stroke="#555"/><rect x="897" y="185" width="3" height="3" fill="none" stroke="#555" stroke-width=".8"/>
  <path d="M914 181L922 189M922 181L914 189" stroke="#555" stroke-width="3.2" stroke-linecap="round"/><path d="M914 181L922 189M922 181L914 189" stroke="#fafafa" stroke-width="1.4" stroke-linecap="round"/>
  <!-- nav bar -->
  <rect x="893.5" y="358.5" width="33" height="115" rx="5" fill="#e2e2e2" fill-opacity=".7" stroke="#8c8c8c" stroke-width="2"/>
  <circle cx="920" cy="364.3" r="3.6" fill="#c8c8c8"/><path d="M918.5 362.8L921.5 365.8M921.5 362.8L918.5 365.8" stroke="#fff" stroke-width="1"/>
  <path d="M916.5 382A9 9 0 1 0 913 396" fill="#eaeaea" stroke="#7a7a7a"/><circle cx="907.6" cy="387.3" r="5" fill="#dcdcdc" stroke="#7a7a7a"/>
  <path d="M911.5 392L916 389.5L921 391.5V398L916.5 400.5L911.5 398.5Z" fill="#8cb8e8" stroke="#3070b8" stroke-width=".8"/><path d="M911.5 392L916.5 394.5L921 391.5M916.5 394.5V400.5" fill="none" stroke="#3070b8" stroke-width=".6"/>
  <path d="M906.5 408H912.5L909.5 411Z" fill="#555"/>
  <path d="M897 415.3H923" stroke="#aaa"/>
  <rect x="902.5" y="424.5" width="10" height="10" fill="#a8d090" stroke="#58a048"/>
  <circle cx="913.5" cy="435" r="3" fill="#eee" stroke="#555" stroke-width="1.2"/><path d="M915.5 437L918 439.5" stroke="#555" stroke-width="1.6"/>
  <path d="M906.5 450H912.5L909.5 453Z" fill="#555"/>
  <circle cx="920" cy="467" r="3.6" fill="#c8c8c8"/><path d="M918 467H922M918.5 465.5L920 464.2L921.5 465.5" stroke="#fff" stroke-width=".9" fill="none"/>
 </g>
</svg>

 <!-- right scrollbar -->
 <div class="a" style="left:928px;top:171px;width:17px;height:654px;background:linear-gradient(90deg,#eaeaea,#f4f4f4)"></div>
 <div class="a" style="left:933px;top:178px;width:0;height:0;border-bottom:5px solid #333;border-left:4px solid transparent;border-right:4px solid transparent"></div>
 <div class="a" style="left:933px;top:815px;width:0;height:0;border-top:5px solid #333;border-left:4px solid transparent;border-right:4px solid transparent"></div>
 <div class="a" style="left:929px;top:489px;width:15px;height:17px;border:1px solid #9a9a9a;border-radius:2px;background:linear-gradient(90deg,#fafafa,#e0e0e0)"></div>
 <!-- view control bar -->
 <div class="a" style="left:57px;top:825px;width:888px;height:18px;background:linear-gradient(#fff 0,#fff 1px,#eaeaea 2px,#efefef 100%)"></div>
 <div class="a" style="left:0;top:843px;width:946px;height:1px;background:#fff"></div>
 <div class="a" style="left:0;top:844px;width:946px;height:1px;background:#8c8c8c"></div>
 <div class="rt" style="left:78px;top:828px;font-size:11.5px;color:#111">1 ： 200</div>
<svg class="a" style="left:0;top:820px" width="950" height="26">
 <rect x="136.5" y="6.5" width="15" height="11" fill="#fff" stroke="#333"/><path d="M137 9H151M137 15H151" stroke="#333"/><rect x="139" y="9.5" width="3" height="2.5" fill="#555"/><rect x="145" y="9.5" width="3" height="2.5" fill="#555"/><rect x="142" y="12" width="3" height="2.5" fill="#555"/>
 <path d="M158.5 11.5L161.5 8H172V15L169 18.5H158.5Z" fill="#b0d4f4" stroke="#1a6cc8"/><path d="M158.5 11.5H169V18.5M169 11.5L172 8" fill="none" stroke="#1a6cc8"/>
 <circle cx="182" cy="11" r="3.5" fill="#fcd860" stroke="#e8a020"/><path d="M182 5V6.5M182 15.5V17M176 11H177.5M186.5 11H188M178 7L179 8M185 14L186 15M186 7L185 8" stroke="#e8a020"/><path d="M184 13.5L190 19.5M190 13.5L184 19.5" stroke="#e02020" stroke-width="1.8"/>
 <circle cx="204" cy="10" r="3.8" fill="#eef4fa" stroke="#3a78c0" stroke-width="1.2"/><path d="M199.5 17H205" stroke="#3a78c0" stroke-width="1.5"/><path d="M205 13.5L211 19.5M211 13.5L205 19.5" stroke="#e02020" stroke-width="1.8"/>
 <path d="M219.5 13H223M222 9H229V15" fill="none" stroke="#1a6cc8" stroke-width="1.2" stroke-dasharray="1.5 1"/><path d="M225.5 12.5L232 19M232 12.5L225.5 19" stroke="#e02020" stroke-width="1.8"/>
 <path d="M240 13H244M243 9H249V18" fill="none" stroke="#1a6cc8" stroke-width="1.2" stroke-dasharray="1.5 1"/><circle cx="251.5" cy="11" r="3" fill="#b8d8f8" stroke="#3a78c0"/><rect x="250" y="14" width="3" height="4" fill="#3a78c0"/>
 <path d="M261.5 11.5L267.5 6L274.5 11.5V19H261.5Z" fill="#f4f4f4" stroke="#333"/><rect x="268" y="13" width="6" height="6" fill="#68a890" stroke="#2a6858"/>
 <path d="M282 12C284 8 290 8 292 11C294 8 298 9 299 11M283 13C283 17 289 17 289 13M292 13C292 17 298 17 298 13" fill="none" stroke="#333" stroke-width="1.1"/>
 <path d="M311 8.5C308 8.5 308 13 310 14V16H312V14C314 13 314 8.5 311 8.5Z" fill="#fff" stroke="#999"/>
 <path d="M326 9V17H338V10H334L332 8H326" fill="none" stroke="#9a9a9a" stroke-dasharray="1.5 1"/><circle cx="333" cy="13" r="2.2" fill="none" stroke="#9a9a9a"/>
 <path d="M347 18V10L352 7L357 10V18M347 13H357M350 10V18M354 10V18" fill="none" stroke="#9a9a9a"/><path d="M358 18H360" stroke="#9a9a9a"/>
 <path d="M368 11L371 8H378V15L375 18H368Z" fill="none" stroke="#9a9a9a"/><path d="M368 11H375V18M375 11L378 8M371 11V14" fill="none" stroke="#9a9a9a"/><path d="M380 10V16" stroke="#9a9a9a"/>
 <path d="M389 5V21M403 5V21M389 7H403M389 7L391.5 5.5V8.5ZM403 7L400.5 5.5V8.5Z" fill="#222" stroke="#222" stroke-width="1"/><path d="M389 16H396" stroke="#222" stroke-dasharray="1.5 1"/><rect x="396.5" y="15" width="6" height="5" fill="#333"/><path d="M397.5 15V13.2C397.5 11 401.5 11 401.5 13.2V15" fill="none" stroke="#333" stroke-width="1"/>
 <path d="M415.5 9.5V15.5L412 12.5Z" fill="#222"/>
 <rect x="661.5" y="5.5" width="13" height="15" rx="2" fill="#f0f0f0" stroke="#9a9a9a"/>
 <path d="M917 9.5V15.5L920.5 12.5Z" fill="#222"/>
 <path d="M938 19.5h1.5M935 19.5h1.5M938 16.5h1.5" stroke="#aaa"/>
</svg>
<div class="a" style="left:424px;top:826px;width:493px;height:16px;background:linear-gradient(#f4f4f4,#e8e8e8)"></div>
<div class="a" style="left:661px;top:825px;width:14px;height:16px;border:1px solid #9a9a9a;border-radius:2px;background:linear-gradient(90deg,#fafafa,#e4e4e4)"></div>

 <!-- status bar -->
 <div class="a" style="left:0;top:845px;width:946px;height:23px;background:linear-gradient(#e6e6e6,#dadada 50%,#c8c8c8)"></div>
 <div class="rt" style="left:-5.5px;top:851px;font-size:11.5px;color:#111;width:311px;overflow:hidden">击可选择其他项目; 按 Ctrl 键并单击可将新项目添加到选择!</div>
 <svg class="a" style="left:930px;top:855px" width="14" height="12"><path d="M9.5 1h1.5v1.5h-1.5zM6.5 4h1.5v1.5h-1.5zM9.5 4h1.5v1.5h-1.5zM3.5 7h1.5v1.5h-1.5zM6.5 7h1.5v1.5h-1.5zM9.5 7h1.5v1.5h-1.5z" fill="#fff"/><path d="M10.5 2h1.5v1.5h-1.5zM7.5 5h1.5v1.5h-1.5zM10.5 5h1.5v1.5h-1.5zM4.5 8h1.5v1.5h-1.5zM7.5 8h1.5v1.5h-1.5zM10.5 8h1.5v1.5h-1.5z" fill="#b0b0b0"/></svg>
 <div class="a" style="left:0;top:868px;width:950px;height:3px;background:#aab0b6"></div>
 <div class="a" style="left:0;top:871px;width:950px;height:1px;background:#555"></div>
 <!-- right frame -->
 <div class="a" style="left:945px;top:28px;width:5px;height:844px;background:linear-gradient(90deg,#c8cacd,#a6a9ae)"></div>
</div>
<div id="dy" class="a">
 <svg class="a" style="left:8px;top:8px" width="17" height="17" viewBox="0 0 17 17"><defs><linearGradient id="dlg" x1="0" y1="1" x2="1" y2="0"><stop offset="0" stop-color="#2050b0"/><stop offset=".5" stop-color="#7898d0"/><stop offset="1" stop-color="#ffffff"/></linearGradient></defs><rect width="17" height="17" fill="url(#dlg)"/><path d="M4 11.5L6.5 2.5C8.5 1.5 11 3 10.5 5.5L9.5 7.5L14 11L10.5 10.5L8.5 8.5L7.5 11Z" fill="#0a1650"/></svg>
 <div class="t" style="left:28px;top:10px;font-size:13px;color:#1a1a2a">Dynamo</div>
 <!-- window buttons -->
 <div class="a" style="left:791px;top:8px;width:31px;height:17px;border:1px solid #6d7f95;border-radius:3px;background:linear-gradient(#e4eef8,#c5d7ea 50%,#b0c6de 51%,#c8dbee)"><div class="a" style="left:10px;top:8px;width:10px;height:3px;background:#fff;border:1px solid #333"></div></div>
 <div class="a" style="left:824px;top:8px;width:31px;height:17px;border:1px solid #6d7f95;border-radius:3px;background:linear-gradient(#e4eef8,#c5d7ea 50%,#b0c6de 51%,#c8dbee)"><div class="a" style="left:10px;top:3px;width:10px;height:9px;background:#fff;border:1px solid #333"><div class="a" style="left:2px;top:2px;width:4px;height:3px;border:1px solid #333"></div></div></div>
 <div class="a" style="left:857px;top:8px;width:31px;height:17px;border:1px solid #6a2a20;border-radius:3px;background:linear-gradient(#f0b0a0,#dc7a62 45%,#c8452a 50%,#d0583c 80%,#e89a80)"><svg class="a" style="left:9px;top:3px" width="13" height="10"><path d="M2 1L11 9M11 1L2 9" stroke="#333" stroke-width="4"/><path d="M2 1L11 9M11 1L2 9" stroke="#fff" stroke-width="2.4"/></svg></div>
 <div id="dyin" class="a">
  <!-- menu -->
  <div class="a" style="left:0;top:0;width:885px;height:25px;background:#353535;border-bottom:1px solid #424242"></div>
  <div class="dmenu" style="left:16px">文件</div>
  <div class="dmenu" style="left:71px">编辑</div>
  <div class="dmenu" style="left:126px">视图</div>
  <div class="dmenu" style="left:181px">软件包</div>
  <div class="dmenu" style="left:248px">设置</div>
  <div class="dmenu" style="left:303px">帮助</div>
  <div class="a" style="left:358px;top:4px;width:16px;height:16px;border-radius:50%;background:#e8e8e8;color:#353535;font-weight:bold;font-size:13px;text-align:center;line-height:16px">!</div>
  <!-- toolbar -->
  <div class="a" style="left:0;top:26px;width:885px;height:31px;background:#373737;border-bottom:1px solid #2a2a2a"></div>
  <svg class="a" style="left:17px;top:33px" width="180" height="18">
   <path d="M0 0H9.5L13.3 3.7V15.7H0Z" fill="#8a8a8a"/><path d="M9.3 0.3L13 4" stroke="#b0b0b0" stroke-width="1.2"/>
   <path d="M43 0H53.2V6H43Z" fill="#858585"/><path d="M37.9 7.8H45.9L47 6.3H53.8L55.5 15.7H39.6Z" fill="#8a8a8a"/><path d="M55 8.5H56.8L55.8 11.5Z" fill="#8a8a8a"/>
   <path d="M81 0.4H96.1V15.7H81Z" fill="#8a8a8a"/><rect x="83.6" y="2.8" width="10" height="3.4" fill="#373737"/><rect x="83.6" y="9" width="10" height="4.5" fill="#373737"/><rect x="90" y="3.2" width="1.4" height="2.4" fill="#aaa"/>
   <path d="M120.8 4.9L126 0.5V3.5C132 3.8 137 8 138.4 14.2C135 10.2 131 9 126 9.4V12.5Z" fill="#8a8a8a"/>
   <path d="M177.5 4.6L172.3 0.2V3.2C166.3 3.5 161.3 7.7 159.9 13.9C163.3 9.9 167.3 8.7 172.3 9.1V12.2Z" fill="#4a4a4a"/>
  </svg>
  <svg class="a" style="left:799px;top:33px" width="90" height="20">
   <path d="M5 17.2C1 17.2 0 11 4.5 10C4.5 5 10 3 13 6.5C15 0 25 0 25.5 8C30 8.5 30 17.2 25 17.2Z" fill="#a6e636"/><path d="M15 7V13.5M12 11L15 14.2L18 11" stroke="#1e1e1e" stroke-width="2.2" fill="none"/>
   <path d="M45.5 3.5H51L53 0.7H60L62 3.5H67.4V15.2H45.5Z" fill="#7a7a7a"/><circle cx="56.5" cy="9.3" r="3.4" fill="#373737"/>
  </svg>
  <!-- library header -->
  <div class="a" style="left:0;top:57px;width:305px;height:21px;background:#242424"></div>
  <div class="t" style="left:16px;top:62px;font-size:12.5px;color:#cfcfcf">库</div>
  <svg class="a" style="left:240px;top:62px" width="62" height="14"><path d="M2.7 1.2V11M23.9 1.2V11M44.9 1.2V11" stroke="#7a7a7a" stroke-width="1.1"/><path d="M8 2H17.7L14 6.5V11H11.7V6.5Z" fill="#3c3c3c"/><path d="M28.6 3H40.6M28.6 5H40.6M28.6 7H40.6M28.6 9H40.6" stroke="#3e3e3e" stroke-width="1.2"/><path d="M55 1.5V10.5L49.8 6Z" fill="#8e8e8e"/><rect x="57.3" y="1.5" width="2" height="9" fill="#8e8e8e"/></svg>
  <div class="a" style="left:305px;top:57px;width:2px;height:758px;background:#2e2e2e"></div>
  <div class="a" style="left:307px;top:57px;width:250px;height:21px;background:#353535;border-top:1px solid #3e3e3e"></div>
  <div class="t" style="left:316px;top:62px;font-size:12.5px;font-weight:bold;color:#d8d8d8">Home*</div>
  <svg class="a" style="left:544px;top:63px" width="10" height="10"><path d="M1 1L9 9M9 1L1 9" stroke="#8a8a8a" stroke-width="1.6"/></svg>
  <div class="a" style="left:557px;top:57px;width:328px;height:21px;background:#232323;border-left:1px solid #3a3a3a;border-top:1px solid #3a3a3a"></div>
  <svg class="a" style="left:868px;top:63px" width="12" height="11"><path d="M0 1.5H11M0 5.5H11M0 9.5H11" stroke="#8a8a8a" stroke-width="2"/></svg>
  <!-- library -->
  <div class="a" style="left:0;top:78px;width:305px;height:703px;background:#353535;overflow:hidden">
   <div class="a" style="left:5px;top:5px;width:294px;height:28px;background:#eff1f0;border-radius:7px"></div>
   <svg class="a" style="left:131px;top:12px" width="14" height="14"><circle cx="5.5" cy="5.5" r="3.8" fill="none" stroke="#333" stroke-width="2.2"/><path d="M8 8L12 12" stroke="#333" stroke-width="2.6"/></svg>
   <div class="t" style="left:152px;top:13px;font-size:13px;color:#555">搜索</div>
   <div class="a" style="left:33px;top:38px;width:1px;height:439px;background:#6e6e6e"></div>
   <div class="a" style="left:33px;top:613px;width:1px;height:90px;background:#6e6e6e"></div>
   <div class="lib" style="top:54px">DividedSurface</div>
<div class="lstub" style="top:60px"></div>
<div class="larr" style="top:57px"></div>
<div class="lib" style="top:86px">Element</div>
<div class="lstub" style="top:92px"></div>
<div class="larr" style="top:89px"></div>
<div class="lib" style="top:118px">FailureMessage</div>
<div class="lstub" style="top:124px"></div>
<div class="larr" style="top:121px"></div>
<div class="lib" style="top:150px">Family</div>
<div class="lstub" style="top:156px"></div>
<div class="larr" style="top:153px"></div>
<div class="lib" style="top:182px">FamilyInstance</div>
<div class="lstub" style="top:188px"></div>
<div class="larr" style="top:185px"></div>
<div class="lib" style="top:214px">FamilyType</div>
<div class="lstub" style="top:220px"></div>
<div class="larr" style="top:217px"></div>
<div class="lib" style="top:246px">FillPatternElement</div>
<div class="lstub" style="top:252px"></div>
<div class="larr" style="top:249px"></div>
<div class="lib" style="top:278px">FilledRegion</div>
<div class="lstub" style="top:284px"></div>
<div class="larr" style="top:281px"></div>
<div class="lib" style="top:310px">FilledRegionType</div>
<div class="lstub" style="top:316px"></div>
<div class="larr" style="top:313px"></div>
<div class="lib" style="top:342px">Floor</div>
<div class="lstub" style="top:348px"></div>
<div class="larr" style="top:345px"></div>
<div class="lib" style="top:374px">FloorType</div>
<div class="lstub" style="top:380px"></div>
<div class="larr" style="top:377px"></div>
<div class="lib" style="top:406px">Form</div>
<div class="lstub" style="top:412px"></div>
<div class="larr" style="top:409px"></div>
<div class="lib" style="top:438px">Grid</div>
<div class="lstub" style="top:444px"></div>
<div class="larr" style="top:441px"></div>
<div class="lib" style="top:470px">ImportInstance</div>
<div class="lstub" style="top:476px"></div>
<div class="a" style="left:50px;top:474px;width:0;height:0;border-top:5px solid #8a8a8a;border-left:3.5px solid transparent;border-right:3.5px solid transparent"></div>
<div class="lib" style="top:623px">Level</div>
<div class="lstub" style="top:629px"></div>
<div class="larr" style="top:626px"></div>
<div class="lib" style="top:655px">LinePatternElement</div>
<div class="lstub" style="top:661px"></div>
<div class="larr" style="top:658px"></div>
<div class="lib" style="top:687px">Material</div>
<div class="lstub" style="top:693px"></div>
<div class="larr" style="top:690px"></div>
<div class="lib" style="left:102px;top:492px">ByGeometries</div>
<div class="lib" style="left:102px;top:522px">ByGeometry</div>
<div class="lib" style="left:102px;top:552px">BySATFile</div>
<div class="lib" style="left:102px;top:584px">Path</div>
   <!-- import instance children -->
   <svg class="a" style="left:25px;top:492px" width="22" height="22"><path d="M8 1H14V8H21V14H14V21H8V14H1V8H8Z" fill="#8db33a"/></svg>
   <div class="a" style="left:53px;top:492px;width:2px;height:82px;background:#8aa83a"></div>
   <div class="t" style="left:26px;top:587px;font-size:20px;font-weight:bold;color:#4e9a9a">?</div>
   <div class="a" style="left:53px;top:584px;width:2px;height:26px;background:#4e8e96"></div>
   <svg class="a" style="left:78px;top:488px" width="16" height="110">
    <circle cx="4" cy="3" r="2.5" fill="#d04040"/><circle cx="11" cy="3" r="2.5" fill="#d04040"/><rect x="2" y="7" width="12" height="10" fill="none" stroke="#4a8ad0" stroke-width="1.2"/><path d="M8 8V15M5.5 12.5L8 15L10.5 12.5" stroke="#fff" stroke-width="1.2" fill="none"/>
    <circle cx="8" cy="33" r="2.5" fill="#d04040"/><rect x="2" y="37" width="12" height="10" fill="none" stroke="#4a8ad0" stroke-width="1.2"/><path d="M8 38V45M5.5 42.5L8 45L10.5 42.5" stroke="#fff" stroke-width="1.2" fill="none"/>
    <text x="2" y="63" font-size="6" fill="#d05050" font-family="Liberation Sans">SAT</text><rect x="2" y="66" width="12" height="10" fill="none" stroke="#4a8ad0" stroke-width="1.2"/><path d="M8 67V74M5.5 71.5L8 74L10.5 71.5" stroke="#fff" stroke-width="1.2" fill="none"/>
    <path d="M1 100V110H15V102H8L6.5 100Z" fill="none" stroke="#4a8ad0" stroke-width="1.2"/><path d="M5 106H6M7.5 106H8.5M10 106H11" stroke="#ccc"/>
   </svg>
  </div>
  <!-- canvas -->
  <div class="a" style="left:307px;top:78px;width:578px;height:701px;background:#f9f9f9;overflow:hidden">
   <svg class="a" style="left:0;top:0" width="578" height="701" viewBox="0 0 578 701"><defs><radialGradient id="dsph" gradientUnits="userSpaceOnUse" cx="367" cy="498" r="96"><stop offset="0" stop-color="#fff"/><stop offset=".1" stop-color="#fbfbfb"/><stop offset=".3" stop-color="#d9d9d9"/><stop offset=".55" stop-color="#a6a6a6"/><stop offset=".8" stop-color="#606060"/><stop offset="1" stop-color="#2e2e2e"/></radialGradient><clipPath id="sphc"><circle cx="362.6" cy="490.3" r="79.6"/></clipPath><clipPath id="eqc"><path d="M274.8 488.1L284.8 488.1L285.2 491.0L286.3 494.0L288.1 496.9L290.4 499.9L293.4 502.8L297.1 505.7L301.3 508.4L306.2 511.0L311.6 513.5L317.5 515.8L323.9 517.9L330.8 519.7L338.0 521.3L345.4 522.6L353.1 523.6L360.9 524.4L368.8 524.7L376.6 524.8L384.3 524.5L391.7 524.0L399.0 523.1L405.8 521.9L412.2 520.4L418.2 518.6L423.6 516.6L428.4 514.4L432.6 512.0L436.1 509.5L439.0 506.8L441.3 504.0L442.9 501.1L443.8 498.2L444.0 495.2L454.0 495.2L454.0 700L274.8 700Z"/></clipPath></defs><g id="grd"><path d="M-11668.3 9077.6L-58.6 376.3M-6450.0 9120.8L2370.9 994.4M-11284.7 9080.8L-51.2 376.0M-8174.6 9106.5L2269.0 958.7M-10901.1 9084.0L-43.9 375.7M-9899.2 9092.3L2176.0 926.1M-10517.5 9087.2L-36.6 375.4M-11623.9 9078.0L2090.9 896.2M-9750.3 9093.5L-22.1 374.8M-5961.3 4654.6L1940.5 843.5M-9366.7 9096.7L-14.9 374.5M-4605.5 3670.8L1873.7 820.0M-8983.1 9099.9L-7.7 374.2M-3741.8 3044.0L1811.8 798.3M-8599.5 9103.0L-0.6 373.9M-3143.4 2609.8L1754.1 778.1M-7832.3 9109.4L13.6 373.3M-2368.5 2047.4L1650.1 741.6M-7448.7 9112.6L20.7 373.0M-2103.3 1855.0L1603.0 725.0M-7065.1 9115.7L27.7 372.7M-1888.5 1699.1L1558.7 709.5M-6681.5 9118.9L34.7 372.4M-1711.0 1570.3L1517.1 694.9M-5914.3 9125.3L48.6 371.8M-1434.9 1370.0L1440.9 668.2M-5530.7 9128.4L55.4 371.5M-1325.4 1290.5L1405.9 655.9M-5147.1 9131.6L62.3 371.3M-1230.0 1221.3L1372.7 644.3M-4763.5 9134.8L69.1 371.0M-1146.2 1160.4L1341.3 633.2M-3192.0 7411.8L82.7 370.4M-1005.7 1058.5L1283.0 612.8M-2601.8 6748.5L89.5 370.1M-946.3 1015.3L1256.0 603.3M-2111.5 6197.5L96.2 369.9M-892.6 976.4L1230.2 594.3M-1697.8 5732.5L102.9 369.6M-843.9 941.1L1205.6 585.6M-1038.0 4991.0L116.1 369.0M-759.0 879.5L1159.6 569.5M-770.7 4690.6L122.7 368.8M-721.8 852.4L1138.1 562.0M-535.2 4425.9L129.3 368.5M-687.4 827.5L1117.5 554.8M-326.1 4191.0L135.9 368.2M-655.7 804.5L1097.8 547.8M28.6 3792.3L148.9 367.7M-598.9 763.3L1060.6 534.8M180.4 3621.6L155.3 367.4M-573.4 744.7L1043.1 528.6M318.3 3466.7L161.8 367.1M-549.5 727.4L1026.2 522.7M444.1 3325.3L168.2 366.9M-527.2 711.2L1010.0 517.0M665.3 3076.7L180.9 366.4M-486.5 681.7L979.3 506.3M763.1 2966.9L187.2 366.1M-468.0 668.3L964.8 501.2M853.5 2865.2L193.5 365.8M-450.4 655.5L950.7 496.2M937.4 2770.9L199.8 365.6M-433.9 643.5L937.2 491.5M1088.4 2601.2L212.3 365.1M-403.3 621.4L911.4 482.4M1156.6 2524.6L218.4 364.8M-389.2 611.1L899.1 478.1M1220.4 2452.9L224.6 364.5M-375.8 601.4L887.3 474.0M1280.4 2385.5L230.8 364.3M-363.1 592.1L875.8 469.9M1390.0 2262.3L243.0 363.8M-339.3 574.9L853.8 462.2M1440.2 2205.9L249.0 363.5M-328.2 566.8L843.3 458.6M1487.6 2152.5L255.1 363.3M-317.6 559.1L833.2 455.0M1532.6 2102.0L261.1 363.0M-307.4 551.8L823.3 451.5M1615.8 2008.5L273.1 362.5M-288.4 538.0L804.4 444.9M1654.3 1965.3L279.0 362.3M-279.5 531.5L795.3 441.7M1691.0 1924.0L284.9 362.0M-270.9 525.2L786.5 438.6M1725.9 1884.7L290.8 361.8M-262.6 519.3L777.9 435.6M1791.2 1811.4L302.5 361.3M-247.1 508.0L761.4 429.8M1821.7 1777.2L308.4 361.1M-239.7 502.6L753.5 427.1M1850.8 1744.4L314.2 360.8M-232.6 497.5L745.8 424.4M1878.8 1712.9L319.9 360.6M-225.8 492.5L738.3 421.7M1931.4 1653.9L331.4 360.1M-212.8 483.1L723.8 416.6M1956.1 1626.1L337.1 359.9M-206.6 478.6L716.9 414.2M1979.9 1599.4L342.8 359.6M-200.6 474.3L710.1 411.8M2002.7 1573.6L348.5 359.4M-194.9 470.1L703.4 409.5M2046.0 1525.1L359.7 358.9M-183.9 462.1L690.6 405.0M2066.4 1502.1L365.3 358.7M-178.6 458.3L684.4 402.8M2086.2 1479.9L370.9 358.5M-173.6 454.6L678.4 400.7M2105.2 1458.5L376.5 358.3M-168.6 451.0L672.5 398.6M2141.4 1417.8L387.5 357.8M-159.2 444.2L661.1 394.6M2158.6 1398.4L393.0 357.6M-154.7 440.9L655.5 392.7M2175.3 1379.7L398.4 357.3M-150.3 437.8L650.1 390.8M2191.4 1361.6L403.9 357.1M-146.1 434.7L644.9 388.9M2222.1 1327.1L414.7 356.7M-137.9 428.7L634.6 385.3M2236.8 1310.6L420.1 356.5M-134.0 425.9L629.6 383.6M2251.0 1294.6L425.4 356.2M-130.2 423.1L624.8 381.9M2264.9 1279.1L430.8 356.0M-126.4 420.4L620.0 380.2M2291.3 1249.3L441.4 355.6M-119.3 415.2L610.8 377.0M2304.0 1235.1L446.7 355.4M-115.9 412.7L606.3 375.4M2316.3 1221.3L451.9 355.1M-112.5 410.3L601.9 373.9M2328.2 1207.8L457.2 354.9M-109.2 407.9L597.6 372.3M2351.2 1182.0L467.6 354.5M-102.9 403.4L589.2 369.4M2362.2 1169.6L472.8 354.3M-99.9 401.1L585.1 368.0M2373.0 1157.5L477.9 354.1M-96.9 399.0L581.1 366.6M2383.5 1145.8L483.1 353.8M-94.0 396.9L577.2 365.2M2403.6 1123.1L493.3 353.4M-88.4 392.8L569.5 362.5M2413.3 1112.2L498.4 353.2M-85.7 390.9L565.8 361.2M2422.8 1101.6L503.4 353.0M-83.0 388.9L562.2 359.9M2432.0 1091.2L508.5 352.8M-80.5 387.0L558.6 358.7M2449.8 1071.2L518.5 352.4M-75.4 383.4L551.6 356.2M2458.4 1061.5L523.5 352.2M-73.0 381.6L548.2 355.0M2466.8 1052.0L528.4 352.0M-70.6 379.9L544.8 353.8M2475.1 1042.8L533.4 351.8M-68.3 378.2L541.6 352.7" stroke="#c8d9e6" stroke-width="1" fill="none"/><path d="M-12051.9 9074.5L-66.0 376.6M-4725.4 9135.1L2483.1 1033.8M-10133.9 9090.3L-29.3 375.1M-8396.9 6422.2L2012.7 868.8M-8215.9 9106.2L6.5 373.6M-2704.4 2291.2L1700.3 759.2M-6297.9 9122.1L41.6 372.1M-1562.0 1462.1L1477.9 681.2M-3916.3 8225.8L75.9 370.7M-1071.9 1106.5L1311.4 622.8M-1344.0 5334.9L109.5 369.3M-799.6 908.9L1182.1 577.4M-139.3 3981.0L142.4 367.9M-626.3 783.1L1078.8 541.2M559.4 3195.8L174.5 366.6M-506.2 696.0L994.4 511.5M1015.5 2683.1L206.0 365.3M-418.2 632.1L924.1 486.9M1336.8 2322.1L236.9 364.0M-350.9 583.3L864.6 466.0M1575.3 2054.1L267.1 362.8M-297.7 544.7L813.7 448.2M1759.3 1847.2L296.7 361.6M-254.7 513.5L769.6 432.7M1905.6 1682.8L325.7 360.4M-219.2 487.7L731.0 419.1M2024.7 1548.9L354.1 359.2M-189.3 466.0L697.0 407.2M2123.6 1437.8L382.0 358.0M-163.9 447.6L666.7 396.6M2207.0 1344.1L409.3 356.9M-141.9 431.7L639.7 387.1M2278.3 1264.0L436.1 355.8M-122.8 417.8L615.3 378.6M2339.9 1194.7L462.4 354.7M-106.0 405.6L593.3 370.9M2393.7 1134.3L488.2 353.6M-91.2 394.8L573.3 363.8M2441.0 1081.0L513.5 352.6M-77.9 385.2L555.1 357.4M2483.1 1033.8L538.3 351.6M-66.0 376.6L538.3 351.6" stroke="#a9b3ba" stroke-width="1" fill="none"/></g><path d="M363.4 487.3L813.7 448.2" stroke="#f05a50" stroke-width="1"/><path d="M363.4 487.3L267.1 362.8" stroke="#3aa845" stroke-width="1"/><circle cx="362.6" cy="490.3" r="79.6" fill="url(#dsph)"/><g clip-path="url(#sphc)"><g clip-path="url(#eqc)"><rect x="270" y="400" width="190" height="190" fill="#fff" fill-opacity=".3"/><use href="#grd" opacity=".6"/></g></g></svg>
   <!-- wires -->
<svg class="a" style="left:0;top:0" width="578" height="400"><path d="M200 330.5C245 330.5 241 346 286 346" stroke="#3a3a3a" stroke-width="3" fill="none"/><path d="M480 323C486 323 486 316 492 316" stroke="#3a3a3a" stroke-width="3" fill="none"/><circle cx="200" cy="330.5" r="3.5" fill="#444"/><circle cx="286" cy="346" r="3.5" fill="#444"/></svg>
<!-- number node -->
<div class="node" style="left:146px;top:296px;width:54px;height:45px">
 <div class="nhead" style="height:22px;font-size:11.3px;padding-top:6px">Number</div>
 <div class="nrow" style="left:0;top:22px;width:35px;height:21px;font-size:10.3px;padding:6px 0 0 5px;background:#e8e5df">7.000</div>
 <div class="nrow" style="left:35px;top:22px;width:17px;height:21px;font-size:11px;padding:5px 0 0 6px;background:#e2ded8">&gt;</div>
</div>
<!-- sphere node -->
<div class="node" style="left:286px;top:289px;width:195px;height:87px">
 <div class="nhead" style="height:22px;font-size:11px;padding-top:6px">Sphere.ByCenterPointRadius</div>
 <div class="nrow" style="left:0;top:22px;width:114px;height:21px;padding:6px 0 0 4px">centerPoint</div>
 <div class="nrow" style="left:0;top:44px;width:114px;height:21px;padding:6px 0 0 4px">radius</div>
 <svg class="a" style="left:106px;top:28px" width="8" height="32"><path d="M2 1L6 5L2 9M2 23L6 27L2 31" stroke="#333" stroke-width="2" fill="none"/></svg>
 <div class="nrow" style="left:148px;top:22px;width:45px;height:21px;padding:6px 0 0 4px">Sphere</div>
 <div class="a" style="left:188px;top:72px;width:1px;height:7px;background:#555"></div>
</div>
<!-- import instance node -->
<div class="node" style="left:491px;top:283px;width:100px;height:66px">
 <div class="nhead" style="height:22px;font-size:11.5px;padding-top:6px;text-align:left;padding-left:38px">ImportInstance.ByGeometry</div>
 <div class="nrow" style="left:0;top:22px;width:100px;height:21px;padding:5px 0 0 5px">geometry</div>
</div>
<!-- toolbar -->
<div class="a" style="left:465px;top:12px;width:105px;height:24px;background:#fbfbfb;border:1px solid #dedede;border-radius:3px;box-shadow:0 1px 1px rgba(0,0,0,.08)"></div>
<div class="a" style="left:517px;top:12px;width:1px;height:24px;background:#ddd"></div>
<svg class="a" style="left:472px;top:16px" width="95" height="18">
 <circle cx="6.8" cy="8.3" r="5.8" fill="none" stroke="#6a6a6a" stroke-width="1.1"/><path d="M3.9 10.3L13.7 0.8L21.5 10.3Z" fill="#fbfbfb" stroke="#6a6a6a" stroke-width="1.1"/><path d="M3.9 10.3L13.7 0.8" stroke="#6a6a6a" stroke-width="1.1"/>
 <path d="M24.4 4.4H33.2V13.2H24.4ZM24.4 4.4L27.4 1.4H36.2V10.2L33.2 13.2M33.2 4.4L36.2 1.4" fill="none" stroke="#6a6a6a" stroke-width="1.1"/>
 <rect x="55.2" y="1.5" width="9.8" height="5.8" fill="#bcd9f5" stroke="#1e90ff"/><path d="M55.2 3.5H65" stroke="#1e90ff"/><rect x="60.4" y="11.2" width="10.4" height="3" fill="#bcd9f5" stroke="#1e90ff"/><rect x="79.5" y="3" width="12.1" height="8.2" fill="#bcd9f5" stroke="#1e90ff"/><path d="M79.5 5H91.6" stroke="#1e90ff"/><path d="M65 4.5L79.5 7M70.8 12.5L79.5 8" stroke="#1e90ff" fill="none"/>
</svg>
<div class="a" style="left:546px;top:47px;width:24px;height:71px;background:#fbfbfb;border:1px solid #dedede;border-radius:3px"></div>
<svg class="a" style="left:551px;top:52px" width="14" height="62"><path d="M1 4V1H4M10 1H13V4M13 10V13H10M4 13H1V10" stroke="#777" stroke-width="1.6" fill="none"/><path d="M7 27V37M2 32H12" stroke="#666" stroke-width="2"/><path d="M2 55H12" stroke="#666" stroke-width="2"/></svg>
<div class="a" style="left:546px;top:126px;width:24px;height:24px;background:#fbfbfb;border:1px solid #dedede;border-radius:3px"></div>
<svg class="a" style="left:550px;top:130px" width="16" height="16"><path d="M8 1V15M1 8H15" stroke="#777" stroke-width="2"/><path d="M8 0L5 3H11ZM8 16L5 13H11ZM0 8L3 5V11ZM16 8L13 5V11Z" fill="#777"/></svg>

  </div>
  <div class="a" style="left:307px;top:779px;width:578px;height:2px;background:#6a6a6a"></div>
  <!-- bottom bar -->
  <div class="a" style="left:0;top:781px;width:885px;height:48px;background:linear-gradient(#242424 0,#1d1d1d 50%,#161616 100%)"></div>
  <div class="a" style="left:4px;top:786px;width:120px;height:38px;background:#2a2a2a;border:1px solid #474747"></div>
  <div class="t" style="left:13px;top:798px;font-size:14px;color:#d8d8d8">自动</div>
  <div class="a" style="left:105px;top:803px;width:0;height:0;border-top:5px solid #aaa;border-left:4.5px solid transparent;border-right:4.5px solid transparent"></div>
  <div class="t" style="left:228px;top:799px;font-size:13px;color:#9a9a9a">运行完成。</div>
  <svg class="a" style="left:631px;top:766px" width="260" height="60" viewBox="0 0 260 60">
 <path d="M5.4 4.6H33.2V33.9H20V15.6Z" fill="#3f8fae" fill-opacity=".5"/>
 <path d="M36.9 4.6L57.4 21.5V25.1H36.9Z" fill="#4a6a78" fill-opacity=".6"/>
 <path d="M36.9 25.1H50V47L64.7 54.4H36.9Z" fill="#1f4e60"/>
 <path d="M10.5 36.9H33.2V54.4Z" fill="#3c4042"/>
 <text x="69" y="43.4" font-family="Liberation Serif" font-style="italic" font-weight="bold" font-size="38" letter-spacing=".5" fill="#1d4556">tuituisoft</text>
 <text x="114.7" y="43.4" font-family="Liberation Sans" font-weight="bold" font-size="15.5" fill="#1d4556" transform="translate(100,0)">.com</text>
</svg>
<svg class="a" style="left:870px;top:816px" width="14" height="12"><path d="M10 0h2v2h-2zM7 3h2v2h-2zM10 3h2v2h-2zM4 6h2v2h-2zM7 6h2v2h-2zM10 6h2v2h-2zM1 9h2v2h-2zM4 9h2v2h-2zM7 9h2v2h-2zM10 9h2v2h-2z" fill="#f0f0f0"/></svg>

 </div>
</div>
</body></html>
